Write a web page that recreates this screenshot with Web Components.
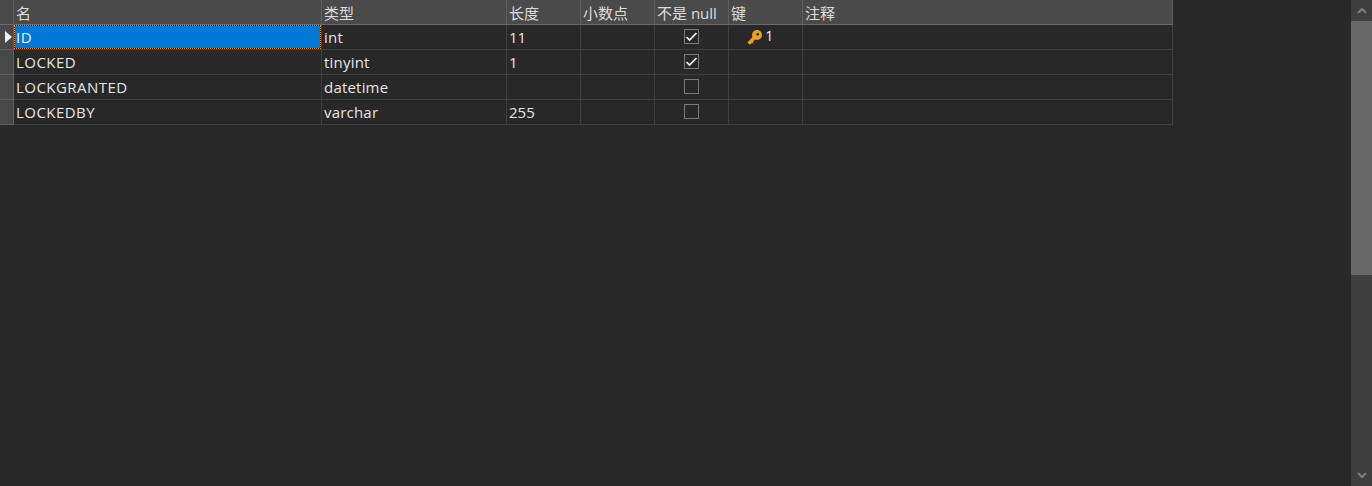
<!DOCTYPE html>
<html lang="zh">
<head>
<meta charset="utf-8">
<title>表结构</title>
<style>
html, body { margin: 0; padding: 0; height: 100%; background: #282828; overflow: hidden; }
</style>
</head>
<body>
<design-window>
  <field-grid>
    <grid-row head>
      <grid-cell head>名</grid-cell>
      <grid-cell head>类型</grid-cell>
      <grid-cell head>长度</grid-cell>
      <grid-cell head>小数点</grid-cell>
      <grid-cell head>不是 null</grid-cell>
      <grid-cell head>键</grid-cell>
      <grid-cell head>注释</grid-cell>
    </grid-row>
    <grid-row current>
      <grid-cell selected name>ID</grid-cell>
      <grid-cell type>int</grid-cell>
      <grid-cell>11</grid-cell>
      <grid-cell></grid-cell>
      <grid-cell center><check-box checked></check-box></grid-cell>
      <grid-cell><key-mark>1</key-mark></grid-cell>
      <grid-cell></grid-cell>
    </grid-row>
    <grid-row>
      <grid-cell name>LOCKED</grid-cell>
      <grid-cell type>tinyint</grid-cell>
      <grid-cell>1</grid-cell>
      <grid-cell></grid-cell>
      <grid-cell center><check-box checked></check-box></grid-cell>
      <grid-cell></grid-cell>
      <grid-cell></grid-cell>
    </grid-row>
    <grid-row>
      <grid-cell name>LOCKGRANTED</grid-cell>
      <grid-cell type>datetime</grid-cell>
      <grid-cell></grid-cell>
      <grid-cell></grid-cell>
      <grid-cell center><check-box></check-box></grid-cell>
      <grid-cell></grid-cell>
      <grid-cell></grid-cell>
    </grid-row>
    <grid-row>
      <grid-cell name>LOCKEDBY</grid-cell>
      <grid-cell type>varchar</grid-cell>
      <grid-cell>255</grid-cell>
      <grid-cell></grid-cell>
      <grid-cell center><check-box></check-box></grid-cell>
      <grid-cell></grid-cell>
      <grid-cell></grid-cell>
    </grid-row>
  </field-grid>
  <scroll-bar></scroll-bar>
</design-window>

<script>
// outer frame: grid area on the left, scrollbar on the right
class DesignWindow extends HTMLElement {
  constructor() {
    super();
    this.attachShadow({ mode: 'open' }).innerHTML = `
      <style>
        :host {
          display: flex;
          height: 486px;
          background: #282828;
          color: #e6e6e6;
          font: 15px "Open Sans", "Noto Sans CJK SC", sans-serif;
        }
      </style>
      <slot></slot>`;
  }
}

class FieldGrid extends HTMLElement {
  constructor() {
    super();
    this.attachShadow({ mode: 'open' }).innerHTML = `
      <style>
        :host { display: block; flex: 1; min-width: 0; }
      </style>
      <slot></slot>`;
  }
}

// one row, the little cell on the left is the row header
class GridRow extends HTMLElement {
  constructor() {
    super();
    this.attachShadow({ mode: 'open' }).innerHTML = `
      <style>
        :host {
          display: grid;
          grid-template-columns: 14px 308px 185px 74px 74px 74px 74px 370px;
          width: 1173px;
          height: 25px;
        }
        .mark {
          display: flex;
          align-items: center;
          box-sizing: border-box;
          padding-left: 5px;
          background: #484848;
          border-right: 1px solid #5f5f5f;
          border-bottom: 1px solid #5f5f5f;
        }
        :host([head]) .mark { border-bottom-color: #6a6a6a; }
        svg { display: none; width: 7px; height: 12px; }
        :host([current]) svg { display: block; }
      </style>
      <div class="mark"><svg viewBox="0 0 7 12"><path d="M0 0 L7 6 L0 12 Z" fill="#f0f0f0"/></svg></div>
      <slot></slot>`;
  }
}

class GridCell extends HTMLElement {
  constructor() {
    super();
    this.attachShadow({ mode: 'open' }).innerHTML = `
      <style>
        :host {
          display: flex;
          align-items: center;
          box-sizing: border-box;
          min-width: 0;
          padding: 0 2px;
          white-space: nowrap;
          border-right: 1px solid #404040;
          border-bottom: 1px solid #404040;
        }
        :host([head]) {
          background: #4a4a4a;
          border-right-color: #5f5f5f;
          border-bottom-color: #6a6a6a;
          color: #dcdcdc;
        }
        :host([name]) { letter-spacing: .45px; }
        :host([type]) { letter-spacing: .2px; }
        :host([center]) { justify-content: center; }
        /* focus rectangle, dotted black and orange */
        :host([selected]) {
          color: #f2f2f2;
          background-color: #0078d7;
          background-image:
            repeating-linear-gradient(90deg, #f08a24 0 1px, #101010 1px 2px),
            repeating-linear-gradient(90deg, #f08a24 0 1px, #101010 1px 2px),
            repeating-linear-gradient(0deg, #f08a24 0 1px, #101010 1px 2px),
            repeating-linear-gradient(0deg, #f08a24 0 1px, #101010 1px 2px);
          background-size: 100% 1px, 100% 1px, 1px 100%, 1px 100%;
          background-position: 0 0, 0 100%, 0 0, 100% 0;
          background-repeat: no-repeat;
          background-clip: padding-box;
        }
      </style>
      <slot></slot>`;
  }
}

class CheckBox extends HTMLElement {
  constructor() {
    super();
    this.attachShadow({ mode: 'open' }).innerHTML = `
      <style>
        :host {
          display: block;
          box-sizing: border-box;
          width: 15px;
          height: 15px;
          border: 1px solid #7a7a7a;
          margin-top: -1px;
        }
        svg { display: none; width: 13px; height: 13px; }
        :host([checked]) svg { display: block; }
      </style>
      <svg viewBox="0 0 13 13"><path d="M1.5 7 L4.5 10 L11.5 3" fill="none" stroke="#f2f2f2" stroke-width="1.7"/></svg>`;
  }
}

class KeyMark extends HTMLElement {
  constructor() {
    super();
    this.attachShadow({ mode: 'open' }).innerHTML = `
      <style>
        :host {
          display: flex;
          align-items: flex-start;
          gap: 3px;
          height: 24px;
          line-height: 21px;
          margin-left: 16px;
        }
        svg { width: 15px; height: 15px; margin-top: 5px; flex: none; }
      </style>
      <svg viewBox="0 0 15 15">
        <circle cx="10" cy="5" r="5" fill="#f0a01e"/>
        <circle cx="10.8" cy="4.2" r="1.3" fill="#282828"/>
        <path d="M7.5 7.5 L1.6 13.6" stroke="#f0a01e" stroke-width="3.4" fill="none"/>
        <path d="M4 11 L5.8 12.8" stroke="#f0a01e" stroke-width="2.2" fill="none"/>
      </svg>
      <slot></slot>`;
  }
}

class ScrollBar extends HTMLElement {
  constructor() {
    super();
    this.attachShadow({ mode: 'open' }).innerHTML = `
      <style>
        :host {
          display: flex;
          flex-direction: column;
          flex: none;
          width: 21px;
          background: #3e3e3e;
        }
        .btn { display: flex; align-items: center; justify-content: center; height: 21px; flex: none; }
        .thumb { height: 254px; flex: none; background: #686868; }
        .track { flex: 1; }
        svg { width: 10px; height: 7px; }
      </style>
      <div class="btn"><svg viewBox="0 0 10 7"><path d="M1 6 L5 2 L9 6" fill="none" stroke="#7d7d7d" stroke-width="2"/></svg></div>
      <div class="thumb"></div>
      <div class="track"></div>
      <div class="btn"><svg viewBox="0 0 10 7"><path d="M1 1 L5 5 L9 1" fill="none" stroke="#7d7d7d" stroke-width="2"/></svg></div>`;
  }
}

customElements.define('design-window', DesignWindow);
customElements.define('field-grid', FieldGrid);
customElements.define('grid-row', GridRow);
customElements.define('grid-cell', GridCell);
customElements.define('check-box', CheckBox);
customElements.define('key-mark', KeyMark);
customElements.define('scroll-bar', ScrollBar);
</script>
</body>
</html>
